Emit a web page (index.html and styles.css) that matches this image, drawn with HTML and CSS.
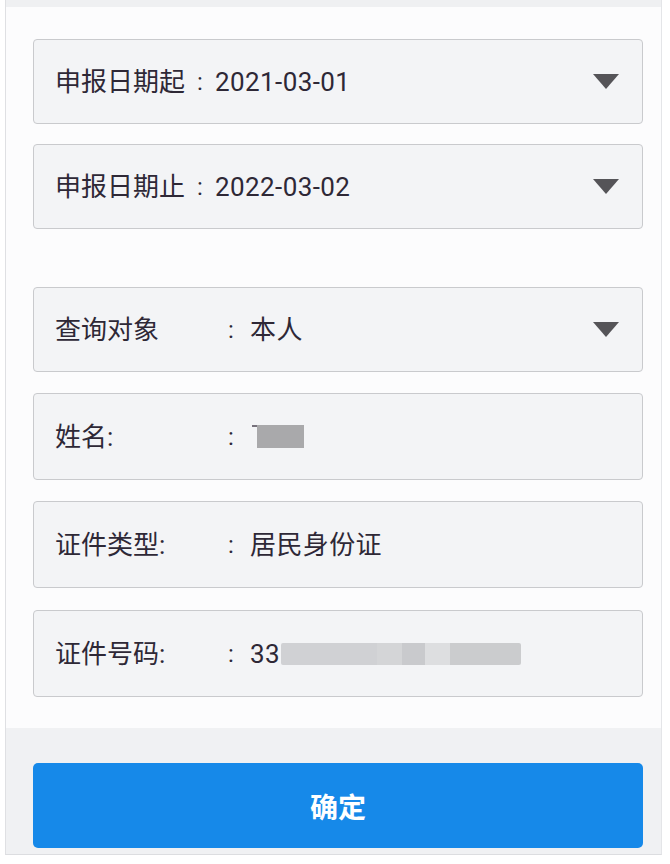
FILE: index.html
```html
<!DOCTYPE html>
<html lang="zh-CN">
<head>
<meta charset="utf-8">
<title>查询</title>
<link rel="stylesheet" href="styles.css">
</head>
<body>
<div class="frame">
  <div class="topbar"></div>
  <div class="form">
    <div class="field short">
      <span class="label">申报日期起</span><span class="sep">:</span><span class="value">2021-03-01</span>
      <svg class="caret" width="26" height="15" viewBox="0 0 26 15"><polygon points="0,0 26,0 13,15" fill="#555458"/></svg>
    </div>
    <div class="field short">
      <span class="label">申报日期止</span><span class="sep">:</span><span class="value">2022-03-02</span>
      <svg class="caret" width="26" height="15" viewBox="0 0 26 15"><polygon points="0,0 26,0 13,15" fill="#555458"/></svg>
    </div>
    <div class="field short wide gap-top">
      <span class="label">查询对象</span><span class="sep">:</span><span class="value">本人</span>
      <svg class="caret" width="26" height="15" viewBox="0 0 26 15"><polygon points="0,0 26,0 13,15" fill="#555458"/></svg>
    </div>
    <div class="field tall wide">
      <span class="label">姓名:</span><span class="sep">:</span><span class="value"><span class="frag"></span><span class="mask-name"></span></span>
    </div>
    <div class="field tall wide">
      <span class="label">证件类型:</span><span class="sep">:</span><span class="value">居民身份证</span>
    </div>
    <div class="field tall wide last">
      <span class="label">证件号码:</span><span class="sep">:</span><span class="value">33<span class="mask-id"></span></span>
    </div>
  </div>
  <div class="footer">
    <button class="confirm" type="button">确定</button>
  </div>
</div>
</body>
</html>
```
FILE: styles.css
```css
* { box-sizing: border-box; }
html, body { margin: 0; padding: 0; background: #ffffff; }
body {
  font-family: Roboto, "Noto Sans CJK SC", sans-serif;
  color: #2e2836;
}
.frame {
  margin-left: 5px;
  width: 657px;
  background: #fcfcfd;
  border-left: 1px solid #dfe0e3;
  border-right: 1px solid #e4e5e8;
  border-bottom: 1px solid #dcdde0;
}
.topbar {
  height: 7px;
  background: #eff0f2;
}
.form {
  padding: 32px 18px 31px 27px;
  display: flex;
  flex-direction: column;
  gap: 20px;
}
.field {
  display: flex;
  align-items: center;
  padding: 0 23px 0 21px;
  background: #f3f4f6;
  border: 1px solid #c9cacd;
  border-radius: 4px;
  font-size: 25px;
  line-height: 1;
}
.field.short { height: 85px; }
.field.tall { height: 87px; margin-top: 1px; }
.field.last { margin-top: 2px; }
.field.gap-top { margin-top: 38px; }
.label {
  flex: none;
  font-size: 26px;
}
.sep {
  flex: none;
  width: 30px;
  text-align: center;
  font-size: 24px;
}
.wide .label { width: 161px; }
.wide .value { padding-left: 4px; }
.value {
  flex: 1;
  display: flex;
  align-items: center;
  font-size: 26px;
  letter-spacing: 0.4px;
}
.caret { flex: none; }
.frag {
  display: inline-block;
  width: 5px;
  height: 23px;
  margin-left: 2px;
  border-top: 2px solid #77727c;
}
.mask-name {
  display: inline-block;
  width: 47px;
  height: 23px;
  background: #a9a9ab;
}
.mask-id {
  display: inline-block;
  width: 240px;
  height: 22px;
  margin-left: 1px;
  border-radius: 2px;
  background: linear-gradient(to right,
    #d0d1d4 0, #d0d1d4 96px,
    #d4d5d7 96px, #d4d5d7 121px,
    #c9cacd 121px, #c9cacd 144px,
    #dddee0 144px, #dddee0 169px,
    #cbccce 169px, #cbccce 240px);
}
.footer {
  background: #f0f1f3;
  padding: 35px 18px 6px 27px;
}
.confirm {
  display: block;
  width: 100%;
  height: 85px;
  border: none;
  border-radius: 5px;
  background: #1689e9;
  color: #ffffff;
  font-family: "Noto Sans CJK SC", sans-serif;
  font-size: 28px;
  font-weight: 700;
  padding: 0;
  margin: 0;
}
```
